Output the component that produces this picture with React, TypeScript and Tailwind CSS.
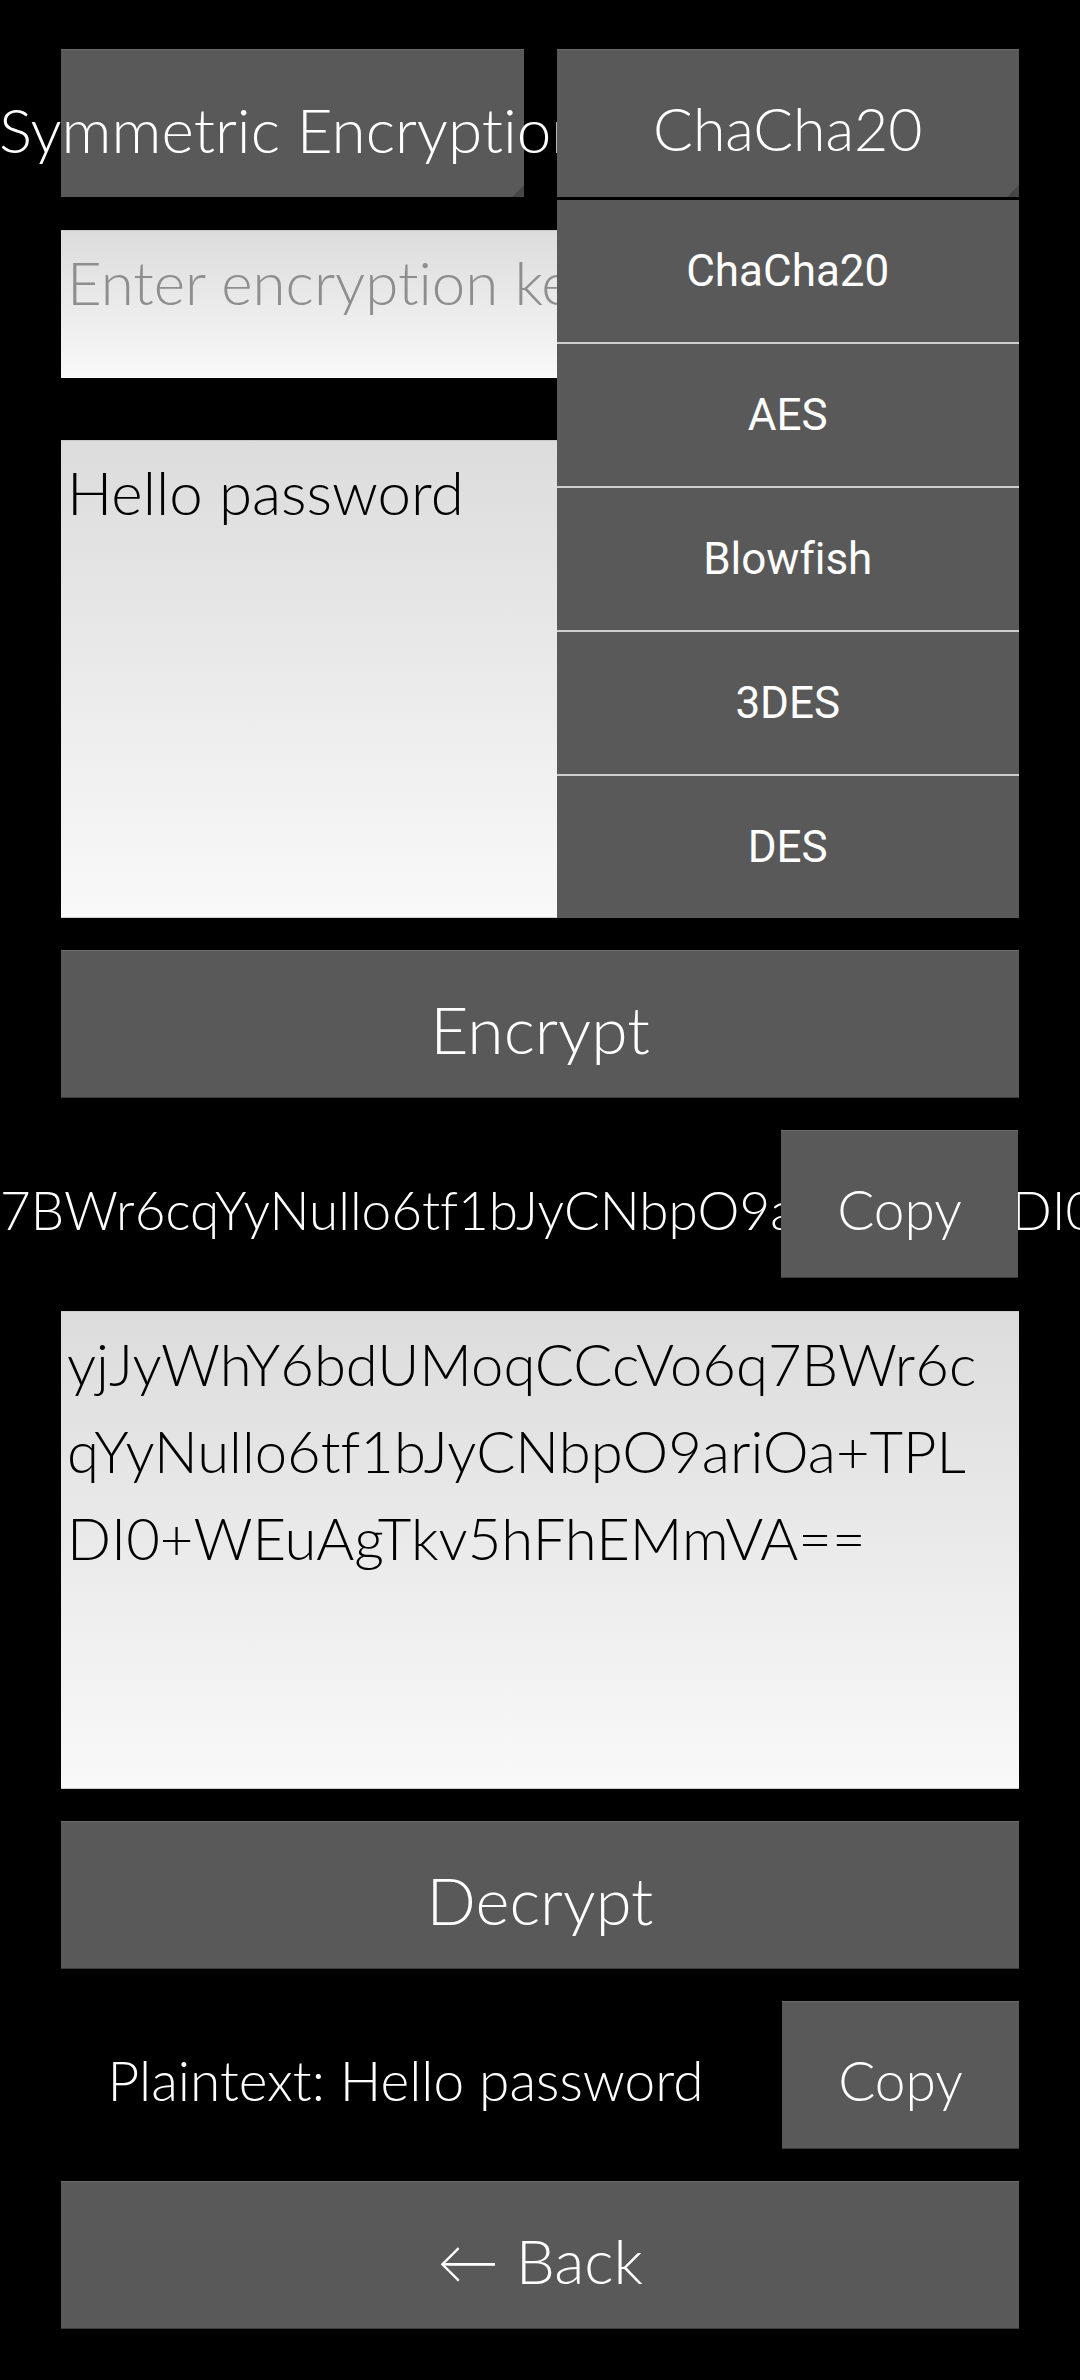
import React from "react";

const algorithms = ["ChaCha20", "AES", "Blowfish", "3DES", "DES"];

function Corner() {
  return (
    <svg
      className="absolute bottom-0 right-0"
      width="12"
      height="12"
      viewBox="0 0 12 12"
    >
      <polygon points="12,0 12,12 0,12" fill="#474747" />
    </svg>
  );
}

function GrayButton({ label, size }: { label: string; size: string }) {
  return (
    <div
      className={
        "mt-[32px] h-[148px] pt-[10px] bg-[#595959] border-t border-[#6a6a6a] border-b border-b-[#3a3a3a] flex items-center justify-center leading-none " +
        size
      }
    >
      {label}
    </div>
  );
}

export default function App() {
  return (
    <div className="h-[2380px] w-[1080px] overflow-hidden bg-black text-white font-['Lato','Noto_Sans',sans-serif] font-light [font-variant-ligatures:none]">
      <div className="flex flex-col px-[61px] pt-[49px]">
        {/* spinners */}
        <div className="flex gap-[33px] h-[148px]">
          <div className="relative flex-1 basis-0 min-w-0 pt-[10px] bg-[#595959] border-t border-[#6a6a6a] flex items-center justify-center">
            <span className="whitespace-nowrap text-[62px] leading-none">
              Symmetric Encryption
            </span>
            <Corner />
          </div>
          <div className="relative z-10 flex-1 basis-0 min-w-0 bg-[#595959] border-t border-[#6a6a6a]">
            <div className="h-full pt-[10px] flex items-center justify-center whitespace-nowrap text-[59px] leading-none">
              ChaCha20
            </div>
            <Corner />
            <div className="absolute left-0 right-0 top-[150px] flex flex-col font-['Roboto',sans-serif] font-normal">
              {algorithms.map((a, i) => (
                <div
                  key={a}
                  className={
                    i === 0
                      ? "h-[142px] bg-[#595959] flex items-center justify-center text-[44px]"
                      : "h-[144px] bg-[#595959] border-t-2 border-[#cdcdcd] flex items-center justify-center text-[44px]"
                  }
                >
                  {a}
                </div>
              ))}
            </div>
          </div>
        </div>

        {/* key */}
        <div className="mt-[33px] h-[148px] bg-gradient-to-b from-[#dcdcdc] to-[#f9f9f9] border-t border-[#c9c9c9] px-[6px] pt-[8px] text-[60px] leading-[87px] text-[#8e8e8e] whitespace-nowrap overflow-hidden">
          Enter encryption key
        </div>

        {/* message */}
        <div className="mt-[62px] h-[478px] bg-gradient-to-b from-[#dcdcdc] to-[#f9f9f9] border-t border-[#c9c9c9] border-b border-b-[#cfcfcf] px-[6px] pt-[8px] text-[60px] leading-[87px] text-black">
          Hello password
        </div>

        <GrayButton label="Encrypt" size="text-[66px]" />

        {/* ciphertext label + copy */}
        <div className="-mx-[61px] mt-[32px] h-[148px] flex">
          <div className="relative flex-1 min-w-0 pt-[10px] flex items-center">
            <span className="relative whitespace-nowrap text-[53px] leading-none">
              <span className="absolute right-full">yjJyWhY6bdUMoqCCcVo6q</span>
              7BWr6cqYyNullo6tf1bJyCNbpO9ariOa+TPLDI0+WEuAgTkv5hFhEMmVA==
            </span>
          </div>
          <div className="relative z-10 mr-[62px] w-[237px] shrink-0 pt-[10px] bg-[#595959] border-t border-[#6a6a6a] border-b border-b-[#3a3a3a] flex items-center justify-center text-[55px] leading-none">
            Copy
          </div>
        </div>

        {/* ciphertext box */}
        <div className="mt-[33px] h-[478px] bg-gradient-to-b from-[#dcdcdc] to-[#f9f9f9] border-t border-[#c9c9c9] border-b border-b-[#cfcfcf] px-[6px] pt-[8px] text-[58px] leading-[87px] text-black whitespace-nowrap overflow-hidden">
          <div>yjJyWhY6bdUMoqCCcVo6q7BWr6c</div>
          <div>qYyNullo6tf1bJyCNbpO9ariOa+TPL</div>
          <div>DI0+WEuAgTkv5hFhEMmVA==</div>
        </div>

        <GrayButton label="Decrypt" size="text-[65px]" />

        {/* plaintext + copy */}
        <div className="mt-[32px] h-[148px] flex">
          <div className="flex-1 min-w-0 pt-[10px] flex items-center justify-center pr-[32px] text-[55px] leading-none whitespace-nowrap">
            Plaintext: Hello password
          </div>
          <div className="w-[237px] shrink-0 pt-[10px] bg-[#595959] border-t border-[#6a6a6a] border-b border-b-[#3a3a3a] flex items-center justify-center text-[55px] leading-none">
            Copy
          </div>
        </div>

        <GrayButton label="← Back" size="text-[62px]" />
      </div>
    </div>
  );
}
